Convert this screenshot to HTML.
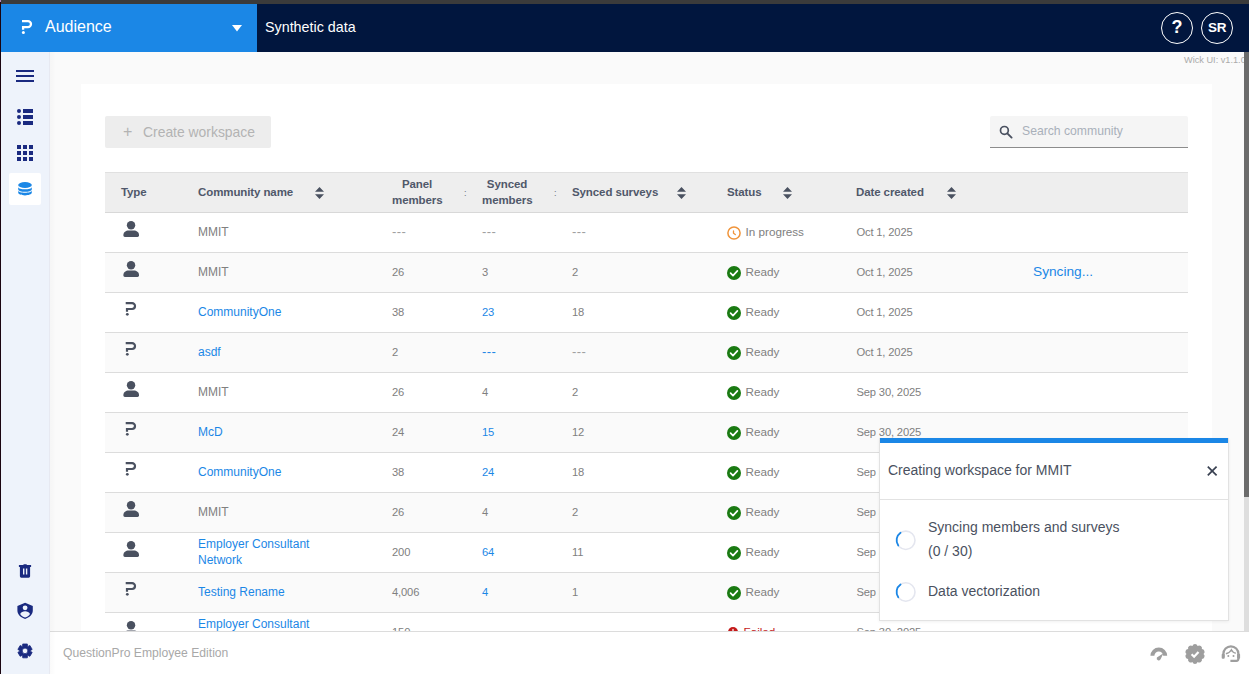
<!DOCTYPE html>
<html lang="en">
<head>
<meta charset="utf-8">
<title>Synthetic data</title>
<style>
*{box-sizing:border-box;margin:0;padding:0}
html,body{width:1249px;height:674px;overflow:hidden;background:#fafafa;font-family:"Liberation Sans",sans-serif;color:#777}
.abs{position:absolute}
#topstrip{left:0;top:0;width:1249px;height:4px;background:#3b3b3b}
#leftstrip{left:0;top:0;width:1px;height:674px;background:#1a0410}
#tlpx{left:0;top:0;width:1px;height:2px;background:#b48ac4}
#header{left:1px;top:4px;width:1248px;height:48px;background:#01163e}
#brand{left:0;top:0;width:256px;height:48px;background:#1b87e6}
#brand .name{left:44px;top:13px;font-size:16px;color:#fff;line-height:20px;white-space:nowrap}
#pagetitle{left:264px;top:14px;font-size:14.3px;color:#fff;line-height:18px;white-space:nowrap}
.circ{width:32px;height:32px;border:1.5px solid #fff;border-radius:50%;color:#fff;font-weight:bold;text-align:center}
#help{left:1160px;top:8px;font-size:18px;line-height:29px}
#user{left:1200px;top:8px;font-size:13.5px;line-height:29px;letter-spacing:-0.3px}
#wick{left:1184px;top:54px;font-size:9.2px;color:#aaa;white-space:nowrap;line-height:12px}
#sidebar{left:1px;top:52px;width:49px;height:622px;background:#eef3fb;border-right:1px solid #e7e9f1}
#sideshadow{left:50px;top:52px;width:6px;height:622px;background:linear-gradient(to right,rgba(0,0,0,.02),rgba(0,0,0,0))}
#active{left:8px;top:121px;width:32px;height:32px;background:#fff;border-radius:2px}
#card{left:81px;top:84px;width:1131px;height:560px;background:#fff}
#createbtn{left:105px;top:116px;width:166px;height:32px;background:#ededed;border-radius:2px;color:#b3b3b3;font-size:13.9px;line-height:32px;white-space:nowrap}
#search{left:990px;top:116px;width:198px;height:32px;background:#f5f5f5;border-bottom:1px solid #8c8c8c;border-radius:2px 2px 0 0}
#search span{left:32px;top:8px;font-size:12.2px;color:#a9b0ba;line-height:14px;white-space:nowrap}
#thead{left:105px;top:172px;width:1083px;height:41px;background:#eeeeee;border-top:1px solid #e0e0e0;border-bottom:1px solid #d8d8d8;font-weight:bold;font-size:11.5px;letter-spacing:-0.1px;color:#50586a}
#thead div{position:absolute;line-height:16px;white-space:nowrap}
.row{left:105px;width:1083px;height:40px;border-bottom:1px solid #dcdcdc;font-size:12px;color:#808080}
.row.alt{background:#fafafa}
.row div{position:absolute;line-height:16px;white-space:nowrap;top:11px}
.row .two{top:3px}
.row a,.lnk{color:#1b87e6;text-decoration:none}
.c1{left:93px}.c2{left:287px}.c3{left:377px}.c4{left:467px}.c5{left:640.5px}.c6{left:751.4px}
.row .c2,.row .c3,.row .c4,.row .c6{font-size:11.2px;letter-spacing:-0.15px}
.row .c5{font-size:11.7px}
.d{font-size:13px;letter-spacing:0.4px;position:relative;top:0;color:#a0a0a0}
.lnk .d{color:#1b87e6}
.st{left:622px}
#footer{left:50px;top:631px;width:1199px;height:43px;background:#fff;border-top:1px solid #dcdcdc}
#footer span{left:13px;top:13px;font-size:12.15px;color:#a8a8a8;line-height:16px;white-space:nowrap}
#sbtrack{left:1244px;top:52px;width:5px;height:579px;background:#dedede}
#sbthumb{left:1244px;top:52px;width:5px;height:445px;background:#6b6b6b}
#toast{left:879px;top:438px;width:350px;height:183px;background:#fff;border:1px solid #e2e2e2;border-top:0;padding-top:5px;box-shadow:0 1px 3px rgba(0,0,0,.06)}
#toast .bar{left:0;top:0;width:348px;height:5px;background:#1b87e6}
#toast .ttl{left:8px;top:23px;font-size:14px;color:#4a5160;line-height:18px;white-space:nowrap}
#toast .hr{left:0;top:61px;width:348px;height:1px;background:#e2e2e2}
#toast .t1{left:48px;top:77px;font-size:14px;color:#4a5160;line-height:24px;white-space:nowrap}
#toast .t2{left:48px;top:143px;font-size:14px;color:#4a5160;line-height:20px;white-space:nowrap}
svg{position:absolute;overflow:visible}
</style>
</head>
<body>
<div class="abs" id="header">
  <div class="abs" id="brand">
    <svg style="left:0;top:0" width="40" height="48"><path d="M21 17.1H27A3 3 0 0 1 27 23.1H22.1V25.8" fill="none" stroke="#fff" stroke-width="2.3"/><circle cx="22.4" cy="28.4" r="1.5" fill="#fff"/></svg>
    <div class="abs name">Audience</div>
    <svg style="left:231px;top:21px" width="10" height="6.5" viewBox="0 0 10 6" preserveAspectRatio="none"><path d="M0 0H10L5 6Z" fill="#fff"/></svg>
  </div>
  <div class="abs" id="pagetitle">Synthetic data</div>
  <div class="abs circ" id="help">?</div>
  <div class="abs circ" id="user">SR</div>
</div>
<div class="abs" id="wick">Wick UI: v1.1.0</div>

<div class="abs" id="card"></div>
<div class="abs" id="createbtn"><span class="abs" style="left:18px;font-size:16px">+</span><span class="abs" style="left:38px">Create workspace</span></div>
<div class="abs" id="search">
  <svg style="left:9px;top:9px" width="14" height="14" viewBox="0 0 14 14"><circle cx="5.4" cy="5.4" r="3.9" fill="none" stroke="#4a5160" stroke-width="1.7"/><path d="M8.3 8.3L12.6 12.6" stroke="#4a5160" stroke-width="1.9" stroke-linecap="round"/></svg>
  <span class="abs">Search community</span>
</div>

<div class="abs" id="thead">
  <div style="left:16px;top:11px">Type</div>
  <div style="left:93px;top:11px">Community name</div>
  <div style="left:287px;top:3px;width:50px;text-align:center">Panel<br>members</div>
  <div style="left:359px;top:12px;font-size:9px;font-weight:normal;color:#6a7080">:</div>
  <div style="left:377px;top:3px;width:50px;text-align:center">Synced<br>members</div>
  <div style="left:449px;top:12px;font-size:9px;font-weight:normal;color:#6a7080">:</div>
  <div style="left:467px;top:11px">Synced surveys</div>
  <div style="left:622px;top:11px">Status</div>
  <div style="left:751px;top:11px">Date created</div>
  <svg style="left:210.2px;top:13.5px" width="9" height="12" viewBox="0 0 9 12"><path d="M0 4.70L4.50 0L9 4.70ZM0 7.30L4.50 12L9 7.30Z" fill="#4a5160"/></svg><svg style="left:572.4px;top:13.5px" width="9" height="12" viewBox="0 0 9 12"><path d="M0 4.70L4.50 0L9 4.70ZM0 7.30L4.50 12L9 7.30Z" fill="#4a5160"/></svg><svg style="left:678px;top:13.5px" width="9" height="12" viewBox="0 0 9 12"><path d="M0 4.70L4.50 0L9 4.70ZM0 7.30L4.50 12L9 7.30Z" fill="#4a5160"/></svg><svg style="left:842px;top:13.5px" width="9" height="12" viewBox="0 0 9 12"><path d="M0 4.70L4.50 0L9 4.70ZM0 7.30L4.50 12L9 7.30Z" fill="#4a5160"/></svg>
</div>

<div id="rows">
<div class="abs row" style="top:213px"><svg style="left:0;top:0" width="40" height="39"><circle cx="26.05" cy="12.2" r="4.2" fill="#4a5160"/><path d="M18.4 22C18.4 19 21 17.5 23.5 17.5H28.9C31.4 17.5 34 19 34 22V22.6A1.400 1.400 0 0 1 32.6 24H19.8A1.400 1.400 0 0 1 18.4 22.6Z" fill="#4a5160"/></svg><div class="c1">MMIT</div><div class="c2"><span class="d">---</span></div><div class="c3"><span class="d">---</span></div><div class="c4"><span class="d">---</span></div><svg style="left:622px;top:13px" width="14" height="14" viewBox="0 0 14 14"><circle cx="7" cy="7" r="6.1" fill="none" stroke="#f0943a" stroke-width="1.5"/><path d="M6.5 5V7.200L8.300 8.600" fill="none" stroke="#f0943a" stroke-width="1.3" stroke-linecap="round"/></svg><div class="c5">In progress</div><div class="c6">Oct 1, 2025</div></div>
<div class="abs row alt" style="top:253px"><svg style="left:0;top:0" width="40" height="39"><circle cx="26.05" cy="12.2" r="4.2" fill="#4a5160"/><path d="M18.4 22C18.4 19 21 17.5 23.5 17.5H28.9C31.4 17.5 34 19 34 22V22.6A1.400 1.400 0 0 1 32.6 24H19.8A1.400 1.400 0 0 1 18.4 22.6Z" fill="#4a5160"/></svg><div class="c1">MMIT</div><div class="c2">26</div><div class="c3">3</div><div class="c4">2</div><svg style="left:622px;top:13px" width="14" height="14" viewBox="0 0 14 14"><circle cx="7" cy="7" r="7" fill="#1a7a12"/><path d="M3.6 7.2L6 9.6L10.4 4.9" fill="none" stroke="#fff" stroke-width="1.7" stroke-linecap="round" stroke-linejoin="round"/></svg><div class="c5">Ready</div><div class="c6">Oct 1, 2025</div><div class="lnk" style="left:928px;font-size:13.7px">Syncing...</div></div>
<div class="abs row" style="top:293px"><svg style="left:0;top:0" width="40" height="39"><path d="M20.7 10.200H27.1A2.900 2.900 0 0 1 27.1 16H22V18.800" fill="none" stroke="#4a5160" stroke-width="2.200"/><circle cx="22.3" cy="21.3" r="1.400" fill="#4a5160"/></svg><div class="c1"><span class="lnk">CommunityOne</span></div><div class="c2">38</div><div class="c3"><span class="lnk">23</span></div><div class="c4">18</div><svg style="left:622px;top:13px" width="14" height="14" viewBox="0 0 14 14"><circle cx="7" cy="7" r="7" fill="#1a7a12"/><path d="M3.6 7.2L6 9.6L10.4 4.9" fill="none" stroke="#fff" stroke-width="1.7" stroke-linecap="round" stroke-linejoin="round"/></svg><div class="c5">Ready</div><div class="c6">Oct 1, 2025</div></div>
<div class="abs row alt" style="top:333px"><svg style="left:0;top:0" width="40" height="39"><path d="M20.7 10.200H27.1A2.900 2.900 0 0 1 27.1 16H22V18.800" fill="none" stroke="#4a5160" stroke-width="2.200"/><circle cx="22.3" cy="21.3" r="1.400" fill="#4a5160"/></svg><div class="c1"><span class="lnk">asdf</span></div><div class="c2">2</div><div class="c3"><span class="lnk"><span class="d">---</span></span></div><div class="c4"><span class="d">---</span></div><svg style="left:622px;top:13px" width="14" height="14" viewBox="0 0 14 14"><circle cx="7" cy="7" r="7" fill="#1a7a12"/><path d="M3.6 7.2L6 9.6L10.4 4.9" fill="none" stroke="#fff" stroke-width="1.7" stroke-linecap="round" stroke-linejoin="round"/></svg><div class="c5">Ready</div><div class="c6">Oct 1, 2025</div></div>
<div class="abs row" style="top:373px"><svg style="left:0;top:0" width="40" height="39"><circle cx="26.05" cy="12.2" r="4.2" fill="#4a5160"/><path d="M18.4 22C18.4 19 21 17.5 23.5 17.5H28.9C31.4 17.5 34 19 34 22V22.6A1.400 1.400 0 0 1 32.6 24H19.8A1.400 1.400 0 0 1 18.4 22.6Z" fill="#4a5160"/></svg><div class="c1">MMIT</div><div class="c2">26</div><div class="c3">4</div><div class="c4">2</div><svg style="left:622px;top:13px" width="14" height="14" viewBox="0 0 14 14"><circle cx="7" cy="7" r="7" fill="#1a7a12"/><path d="M3.6 7.2L6 9.6L10.4 4.9" fill="none" stroke="#fff" stroke-width="1.7" stroke-linecap="round" stroke-linejoin="round"/></svg><div class="c5">Ready</div><div class="c6">Sep 30, 2025</div></div>
<div class="abs row alt" style="top:413px"><svg style="left:0;top:0" width="40" height="39"><path d="M20.7 10.200H27.1A2.900 2.900 0 0 1 27.1 16H22V18.800" fill="none" stroke="#4a5160" stroke-width="2.200"/><circle cx="22.3" cy="21.3" r="1.400" fill="#4a5160"/></svg><div class="c1"><span class="lnk">McD</span></div><div class="c2">24</div><div class="c3"><span class="lnk">15</span></div><div class="c4">12</div><svg style="left:622px;top:13px" width="14" height="14" viewBox="0 0 14 14"><circle cx="7" cy="7" r="7" fill="#1a7a12"/><path d="M3.6 7.2L6 9.6L10.4 4.9" fill="none" stroke="#fff" stroke-width="1.7" stroke-linecap="round" stroke-linejoin="round"/></svg><div class="c5">Ready</div><div class="c6">Sep 30, 2025</div></div>
<div class="abs row" style="top:453px"><svg style="left:0;top:0" width="40" height="39"><path d="M20.7 10.200H27.1A2.900 2.900 0 0 1 27.1 16H22V18.800" fill="none" stroke="#4a5160" stroke-width="2.200"/><circle cx="22.3" cy="21.3" r="1.400" fill="#4a5160"/></svg><div class="c1"><span class="lnk">CommunityOne</span></div><div class="c2">38</div><div class="c3"><span class="lnk">24</span></div><div class="c4">18</div><svg style="left:622px;top:13px" width="14" height="14" viewBox="0 0 14 14"><circle cx="7" cy="7" r="7" fill="#1a7a12"/><path d="M3.6 7.2L6 9.6L10.4 4.9" fill="none" stroke="#fff" stroke-width="1.7" stroke-linecap="round" stroke-linejoin="round"/></svg><div class="c5">Ready</div><div class="c6">Sep 30, 2025</div></div>
<div class="abs row alt" style="top:493px"><svg style="left:0;top:0" width="40" height="39"><circle cx="26.05" cy="12.2" r="4.2" fill="#4a5160"/><path d="M18.4 22C18.4 19 21 17.5 23.5 17.5H28.9C31.4 17.5 34 19 34 22V22.6A1.400 1.400 0 0 1 32.6 24H19.8A1.400 1.400 0 0 1 18.4 22.6Z" fill="#4a5160"/></svg><div class="c1">MMIT</div><div class="c2">26</div><div class="c3">4</div><div class="c4">2</div><svg style="left:622px;top:13px" width="14" height="14" viewBox="0 0 14 14"><circle cx="7" cy="7" r="7" fill="#1a7a12"/><path d="M3.6 7.2L6 9.6L10.4 4.9" fill="none" stroke="#fff" stroke-width="1.7" stroke-linecap="round" stroke-linejoin="round"/></svg><div class="c5">Ready</div><div class="c6">Sep 30, 2025</div></div>
<div class="abs row" style="top:533px"><svg style="left:0;top:0" width="40" height="39"><circle cx="26.05" cy="12.2" r="4.2" fill="#4a5160"/><path d="M18.4 22C18.4 19 21 17.5 23.5 17.5H28.9C31.4 17.5 34 19 34 22V22.6A1.400 1.400 0 0 1 32.6 24H19.8A1.400 1.400 0 0 1 18.4 22.6Z" fill="#4a5160"/></svg><div class="c1 two"><span class="lnk">Employer Consultant<br>Network</span></div><div class="c2">200</div><div class="c3"><span class="lnk">64</span></div><div class="c4">11</div><svg style="left:622px;top:13px" width="14" height="14" viewBox="0 0 14 14"><circle cx="7" cy="7" r="7" fill="#1a7a12"/><path d="M3.6 7.2L6 9.6L10.4 4.9" fill="none" stroke="#fff" stroke-width="1.7" stroke-linecap="round" stroke-linejoin="round"/></svg><div class="c5">Ready</div><div class="c6">Sep 30, 2025</div></div>
<div class="abs row alt" style="top:573px"><svg style="left:0;top:0" width="40" height="39"><path d="M20.7 10.200H27.1A2.900 2.900 0 0 1 27.1 16H22V18.800" fill="none" stroke="#4a5160" stroke-width="2.200"/><circle cx="22.3" cy="21.3" r="1.400" fill="#4a5160"/></svg><div class="c1"><span class="lnk">Testing Rename</span></div><div class="c2">4,006</div><div class="c3"><span class="lnk">4</span></div><div class="c4">1</div><svg style="left:622px;top:13px" width="14" height="14" viewBox="0 0 14 14"><circle cx="7" cy="7" r="7" fill="#1a7a12"/><path d="M3.6 7.2L6 9.6L10.4 4.9" fill="none" stroke="#fff" stroke-width="1.7" stroke-linecap="round" stroke-linejoin="round"/></svg><div class="c5">Ready</div><div class="c6">Sep 30, 2025</div></div>
<div class="abs row" style="top:613px"><svg style="left:0;top:0" width="40" height="39"><circle cx="26.05" cy="12.2" r="4.2" fill="#4a5160"/><path d="M18.4 22C18.4 19 21 17.5 23.5 17.5H28.9C31.4 17.5 34 19 34 22V22.6A1.400 1.400 0 0 1 32.6 24H19.8A1.400 1.400 0 0 1 18.4 22.6Z" fill="#4a5160"/></svg><div class="c1 two"><span class="lnk">Employer Consultant<br>Network</span></div><div class="c2">150</div><div class="c3"><span class="lnk"><span class="d">---</span></span></div><div class="c4"><span class="d">---</span></div><svg style="left:623px;top:14.2px" width="10" height="10" viewBox="0 0 14 14"><circle cx="7" cy="7" r="7" fill="#c41a1a"/><path d="M7 3.4V8" stroke="#fff" stroke-width="1.7" stroke-linecap="round"/><circle cx="7" cy="10.6" r="1" fill="#fff"/></svg><div class="c5" style="color:#c41a1a;left:638.5px">Failed</div><div class="c6">Sep 30, 2025</div></div>
</div><!--endrows-->

<div class="abs" id="footer"><span class="abs">QuestionPro Employee Edition</span><svg style="left:0;top:0" width="1199" height="43"><path d="M1100.40 23.80A8.4 8.4 0 0 1 1117.20 23.80H1113.20A4.4 4.4 0 0 0 1104.40 23.80Z" fill="#9e9e9e"/><path d="M1113.40 21.20L1110.70 27.10A2 2 0 0 1 1106.90 25.40Z" fill="#9e9e9e"/><path d="M1147.63 13.92A2.8 2.8 0 0 1 1151.88 17.00A2.8 2.8 0 0 1 1153.50 22.00A2.8 2.8 0 0 1 1151.88 27.00A2.8 2.8 0 0 1 1147.63 30.08A2.8 2.8 0 0 1 1142.37 30.08A2.8 2.8 0 0 1 1138.12 27.00A2.8 2.8 0 0 1 1136.50 22.00A2.8 2.8 0 0 1 1138.12 17.00A2.8 2.8 0 0 1 1142.37 13.92A2.8 2.8 0 0 1 1147.63 13.92Z" fill="#9e9e9e"/><path d="M1141.60 22.20l2.5 2.5l4.4 -4.8" fill="none" stroke="#fff" stroke-width="2.2"/><path d="M1173.40 25.30V21.80A7.5 7.5 0 0 1 1188.40 21.80V26.80A2 2 0 0 1 1186.40 28.80H1180.40" fill="none" stroke="#9e9e9e" stroke-width="2.2"/><rect x="1171.70" y="21.80" width="3" height="5" rx="1" fill="#9e9e9e"/><rect x="1187.10" y="21.80" width="3" height="5" rx="1" fill="#9e9e9e"/><path d="M1175.90 21.70C1178.40 21.10 1180.40 19.70 1181.40 17.70C1182.40 19.70 1184.40 21.10 1185.90 21.10" fill="none" stroke="#9e9e9e" stroke-width="1.4"/><circle cx="1178.30" cy="24.10" r="1" fill="#9e9e9e"/><circle cx="1183.50" cy="24.10" r="1" fill="#9e9e9e"/></svg></div>
<div class="abs" id="sidebar"><div class="abs" id="active"></div>
  <svg style="left:15px;top:18px" width="18" height="12" viewBox="0 0 18 12"><path d="M0 1H18M0 6H18M0 11H18" stroke="#1a2a80" stroke-width="2"/></svg>
  <svg style="left:16px;top:57px" width="16" height="16" viewBox="0 0 16 16"><g fill="#1a2a80"><circle cx="2" cy="2" r="2"/><circle cx="2" cy="8" r="2"/><circle cx="2" cy="14" r="2"/><rect x="6" y="0" width="10" height="4"/><rect x="6" y="6" width="10" height="4"/><rect x="6" y="12" width="10" height="4"/></g></svg>
  <svg style="left:16px;top:93px" width="16" height="16" viewBox="0 0 16 16"><g fill="#1a2a80"><rect x="0" y="0" width="4" height="4"/><rect x="6" y="0" width="4" height="4"/><rect x="12" y="0" width="4" height="4"/><rect x="0" y="6" width="4" height="4"/><rect x="6" y="6" width="4" height="4"/><rect x="12" y="6" width="4" height="4"/><rect x="0" y="12" width="4" height="4"/><rect x="6" y="12" width="4" height="4"/><rect x="12" y="12" width="4" height="4"/></g></svg>
  <svg style="left:17px;top:130px" width="14" height="14" viewBox="0 0 14 14"><g fill="#1b87e6"><ellipse cx="7" cy="3" rx="6.8" ry="3"/><path d="M0.2 5C0.2 8.07 13.8 8.07 13.8 5V7.20C13.8 10.67 0.20 10.67 0.20 7.20Z"/><path d="M0.2 8.60C0.20 11.53 13.80 11.53 13.80 8.60V10.60C13.80 14.33 0.20 14.33 0.20 10.60Z"/></g></svg>
  <svg style="left:0;top:0" width="49" height="622"><g fill="#1a2a80" fill-rule="evenodd"><path d="M17.9 512.9H22.2L22.8 512.2H25.4L26 512.9H30.1V515.1H17.9ZM18.9 515.1H29.1V524.3A1.4 1.4 0 0 1 27.7 525.7H20.3A1.4 1.4 0 0 1 18.9 524.3ZM22 516.4V522.6H23.4V516.4ZM24.9 516.4V522.6H26.3V516.4Z"/><path d="M24.1 550.8L31.8 553.9V558.5C31.8 562.5 28.5 565.6 24.1 566.9C19.7 565.6 16.4 562.5 16.4 558.5V553.9ZM24.1 553.4A2.4 2.4 0 1 0 24.1 558.2A2.4 2.4 0 1 0 24.1 553.4ZM19.2 562C20 560.2 22 559.3 24.1 559.3S28.2 560.2 29 562C28 563.8 26.2 565 24.1 565.6C22 565 20.2 563.8 19.2 562Z"/><path d="M21.63 594.06L21.73 591.97L26.33 591.97L26.43 594.06L27.02 594.40L28.88 593.45L31.18 597.42L29.42 598.56L29.42 599.24L31.18 600.38L28.88 604.35L27.02 603.40L26.43 603.74L26.33 605.83L21.73 605.83L21.63 603.74L21.04 603.40L19.18 604.35L16.88 600.38L18.64 599.24L18.64 598.56L16.88 597.42L19.18 593.45L21.04 594.40ZM24.03 596.10A2.8 2.8 0 1 0 24.03 601.70A2.8 2.8 0 1 0 24.03 596.10Z" stroke="#1a2a80" stroke-width="0.8" stroke-linejoin="round"/></g></svg>
</div>
<div class="abs" id="sideshadow"></div>
<div class="abs" id="sbtrack"></div>
<div class="abs" id="sbthumb"></div>

<div class="abs" id="toast">
  <div class="abs bar"></div>
  <div class="abs ttl">Creating workspace for MMIT</div>
  <div class="abs hr"></div>
  <div class="abs t1">Syncing members and surveys<br>(0 / 30)</div>
  <div class="abs t2">Data vectorization</div>
  <svg style="left:1px;top:5px" width="346" height="177"><circle cx="24.80" cy="97.30" r="9.2" fill="none" stroke="#e4e6ef" stroke-width="1.6"/><path d="M17.26 102.58A9.2 9.2 0 0 1 19.52 89.76" fill="none" stroke="#1b87e6" stroke-width="1.8" stroke-linecap="round"/><circle cx="24.80" cy="149" r="9.2" fill="none" stroke="#e4e6ef" stroke-width="1.6"/><path d="M17.26 154.28A9.2 9.2 0 0 1 19.52 141.46" fill="none" stroke="#1b87e6" stroke-width="1.8" stroke-linecap="round"/><path d="M326.8 23.6l8.80 8.80m0 -8.80l-8.80 8.80" stroke="#3a4252" stroke-width="1.7" fill="none"/></svg>
</div>

<div class="abs" id="topstrip"></div>
<div class="abs" id="leftstrip"></div>
<div class="abs" id="tlpx"></div>
</body>
</html>
